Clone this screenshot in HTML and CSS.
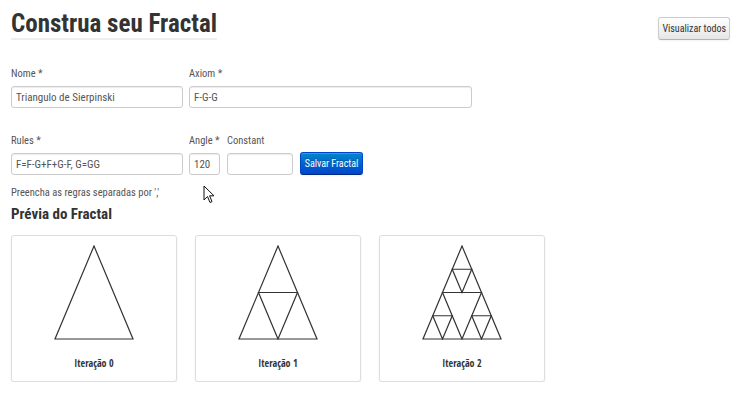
FILE: index.html
```html
<!DOCTYPE html>
<html lang="pt">
<head>
<meta charset="utf-8">
<title>Construa seu Fractal</title>
<link rel="stylesheet" href="styles.css">
</head>
<body>
<div class="page">
  <header class="header">
    <h1 class="title">Construa seu Fractal</h1>
    <button class="btn">Visualizar todos</button>
  </header>

  <form class="form">
    <div class="row">
      <div class="field w-nome">
        <label class="label">Nome *</label>
        <input class="input" type="text" value="Triangulo de Sierpinski">
      </div>
      <div class="field w-axiom">
        <label class="label">Axiom *</label>
        <input class="input" type="text" value="F-G-G">
      </div>
    </div>
    <div class="row row-2">
      <div class="field w-nome">
        <label class="label">Rules *</label>
        <input class="input" type="text" value="F=F-G+F+G-F, G=GG">
      </div>
      <div class="field w-angle">
        <label class="label">Angle *</label>
        <input class="input" type="text" value="120">
      </div>
      <div class="field w-const">
        <label class="label">Constant</label>
        <input class="input" type="text" value="">
      </div>
      <button type="button" class="btn btn-primary">Salvar Fractal</button>
    </div>
    <p class="help">Preencha as regras separadas por ','</p>
  </form>

  <h3 class="subtitle">Prévia do Fractal</h3>

  <div class="cards">
    <div class="card">
      <svg class="tri" width="80" height="95" viewBox="-1 -1 80 95">
        <polygon points="39,0 0,93 78,93" />
      </svg>
      <div class="card-label">Iteração 0</div>
    </div>
    <div class="card">
      <svg class="tri" width="80" height="95" viewBox="-1 -1 80 95">
        <polygon points="39,0 0,93 78,93" />
        <polygon points="19.5,46.5 58.5,46.5 39,93" />
      </svg>
      <div class="card-label">Iteração 1</div>
    </div>
    <div class="card">
      <svg class="tri" width="80" height="95" viewBox="-1 -1 80 95">
        <polygon points="39,0 0,93 78,93" />
        <polygon points="19.5,46.5 58.5,46.5 39,93" />
        <polygon points="29.25,23.25 48.75,23.25 39,46.5" />
        <polygon points="9.75,69.75 29.25,69.75 19.5,93" />
        <polygon points="48.75,69.75 68.25,69.75 58.5,93" />
      </svg>
      <div class="card-label">Iteração 2</div>
    </div>
  </div>
</div>

<svg class="cursor" width="12" height="19" viewBox="0 0 12 19">
  <path d="M1 1 L1 15 L4.5 11.5 L7 17.5 L9 16.6 L6.6 10.8 L11 10.8 Z" fill="#fff" stroke="#111" stroke-width="1" stroke-linejoin="round"/>
</svg>
</body>
</html>
```

FILE: styles.css
```css
* { box-sizing: border-box; }

html, body {
  margin: 0;
  background: #fff;
}

body {
  font-family: "Roboto Condensed", "Liberation Sans Narrow", "Liberation Sans", Arial, sans-serif;
  font-size: 11px;
  color: #333;
  position: relative;
}

.page {
  padding: 0 10px 0 11px;
}

.header {
  display: flex;
  justify-content: space-between;
  align-items: flex-start;
}

.title {
  margin: 10px 0 0;
  font-size: 25px;
  line-height: 28px;
  font-weight: bold;
  color: #333;
  padding-bottom: 0;
  border-bottom: 2px solid #eee;
}

.btn {
  margin-top: 17px;
  height: 23px;
  padding: 0 3px;
  font-family: inherit;
  font-size: 10px;
  color: #333;
  background: linear-gradient(#ffffff, #e6e6e6);
  border: 1px solid #ccc;
  border-bottom-color: #b3b3b3;
  border-radius: 3px;
  box-shadow: inset 0 1px 0 rgba(255,255,255,.2), 0 1px 2px rgba(0,0,0,.05);
}

.form {
  margin-top: 27px;
}

.row {
  display: flex;
  gap: 6px;
  align-items: flex-end;
}

.row-2 {
  margin-top: 26px;
  gap: 7px;
}

.row-2 .w-angle { margin-left: -1px; }

.field {
  display: flex;
  flex-direction: column;
}

.label {
  line-height: 14px;
  margin-bottom: 5px;
  font-size: 10.5px;
  color: #555;
  white-space: nowrap;
}

.w-nome { width: 172px; }
.w-axiom { width: 283px; }
.w-angle { width: 31px; }
.w-const { width: 66px; }

.input {
  height: 22px;
  width: 100%;
  padding: 0 4px;
  font-family: inherit;
  font-size: 11px;
  color: #555;
  background: #fff;
  border: 1px solid #ccc;
  border-radius: 3px;
  box-shadow: inset 0 1px 1px rgba(0,0,0,.075);
  outline: none;
}

.btn-primary {
  margin-top: 0;
  width: 63px;
  height: 23px;
  padding: 0;
  white-space: nowrap;
  font-size: 10px;
  color: #fff;
  background: linear-gradient(#0088cc, #0044cc);
  border: 1px solid #0044cc;
  border-bottom-color: #002a80;
  text-shadow: 0 -1px 0 rgba(0,0,0,.25);
}

.help {
  margin: 11px 0 0;
  line-height: 14px;
  font-size: 10.5px;
  color: #555;
}

.subtitle {
  margin: 5px 0 0;
  font-size: 15px;
  line-height: 18px;
  font-weight: bold;
  color: #333;
}

.cards {
  display: flex;
  gap: 18px;
  margin-top: 12px;
}

.card {
  width: 166px;
  height: 147px;
  border: 1px solid #ddd;
  border-radius: 3px;
  box-shadow: 0 1px 2px rgba(0,0,0,.08);
  display: flex;
  flex-direction: column;
  align-items: center;
  padding-top: 9px;
}

.tri polygon {
  fill: none;
  stroke: #333;
  stroke-width: 1.2;
  stroke-linejoin: miter;
}

.card-label {
  margin-top: 16px;
  line-height: 14px;
  font-family: "Open Sans Condensed", "Roboto Condensed", sans-serif;
  font-size: 10px;
  font-weight: bold;
  color: #333;
}

.cursor {
  position: absolute;
  left: 203px;
  top: 185px;
}
```
